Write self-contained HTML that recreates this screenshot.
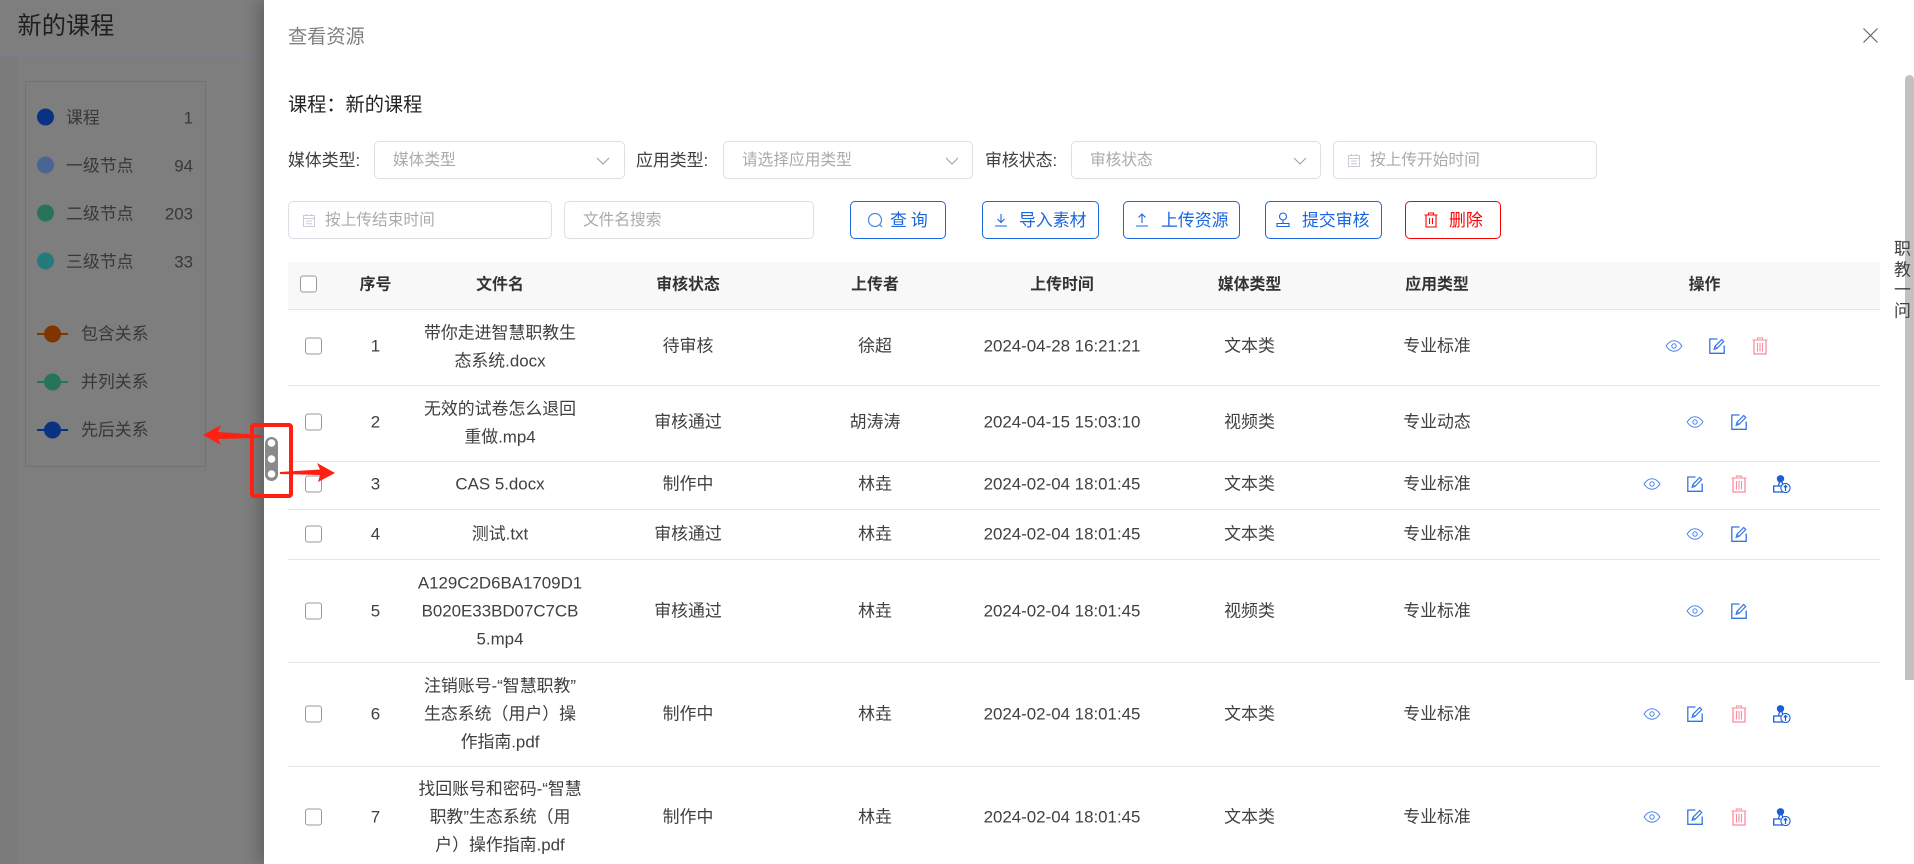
<!DOCTYPE html>
<html lang="zh-CN"><head><meta charset="utf-8"><title>查看资源</title>
<style>
html,body{margin:0;padding:0}
body{width:1914px;height:864px;position:relative;overflow:hidden;background:#7e7e7e;font-family:"Liberation Sans","Noto Sans CJK SC",sans-serif;font-size:16.9px;color:#404040}
div,span,svg{position:absolute;box-sizing:border-box}
.l{white-space:nowrap;transform:translateY(calc(-50% + 1px));line-height:24px}
.lg{color:#383838;transform:translateY(calc(-50% + 2.5px))}
.dot{width:17px;height:17px;border-radius:50%;left:37px;transform:translateY(-50%)}
.rl{width:31px;height:2px;left:37px}
.rc{width:17px;height:17px;border-radius:50%;left:44px;transform:translateY(-50%)}
.f{border:1px solid #dcdfe6;border-radius:5px;height:38px;background:#fff}
.ph{color:#aaa;font-size:15.7px}
.b{height:38px;top:201px;border:1px solid #1a66e0;border-radius:5px;background:#fff}
.bt{color:#1a66e0;top:220px}
.c{transform:translate(-50%,calc(-50% + .6px));text-align:center;white-space:nowrap;line-height:28px}
.h{font-weight:700;color:#333;top:285px;font-size:15.9px}
.hr{left:288px;width:1592px;height:1px;background:#e5e5e5}
.cb{width:17px;height:17px;border:1px solid #98989f;border-radius:3px;background:#fff;left:305px;transform:translateY(-50%)}
.ic{transform:translate(-50%,-50%);overflow:visible}
</style></head><body>
<svg width="0" height="0" style="display:none">
<symbol id="eye" viewBox="0 0 17 12"><path d="M.6 6C3 2.3 5.5.8 8.5.8S14 2.3 16.4 6C14 9.7 11.5 11.2 8.5 11.2S3 9.7.6 6Z" fill="none" stroke="#4a84ea" stroke-width="1"/><circle cx="8.5" cy="6" r="2.2" fill="none" stroke="#4a84ea"/></symbol>
<symbol id="edit" viewBox="0 0 16 16"><path d="M8.5 1H.8V15.300H15.200V7.500" fill="none" stroke="#3376e4" stroke-width="1.300"/><path d="M5.200 11.300l.8-3L12.700 1.500l2 2L8 10.400Z" fill="#fff" stroke="#3376e4" stroke-width="1.200"/><path d="M6 8.400l1.900 1.900" stroke="#3376e4"/></symbol>
<symbol id="trash" viewBox="0 0 16 18"><path d="M.5 3H15.500M5.500 2.500V1h5v1.500" fill="none" stroke="#fb9fae" stroke-width="1.300"/><path d="M2 3.500V17H14V3.500" fill="none" stroke="#fb8b9e" stroke-width="1.300"/><path d="M5.500 6V14.500M8 6V14.500M10.500 6V14.500" stroke="#fb8b9e" stroke-width="1.100"/></symbol>
<symbol id="user" viewBox="0 0 18 18"><circle cx="7.5" cy="3.8" r="3.700" fill="#1a5fd8"/><path d="M6.500 7L5.500 10.500M9 7L10 10" stroke="#1a5fd8" stroke-width="1.300"/><path d="M10 11H.7V17H10" fill="none" stroke="#1a5fd8" stroke-width="1.300"/><circle cx="12.5" cy="13" r="4.600" fill="#fff" stroke="#1a5fd8" stroke-width="1.100"/><path d="M12.500 16V10.500M10.800 12.300l1.700-1.800 1.700 1.800" fill="none" stroke="#1a5fd8" stroke-width="1.200"/></symbol>
<symbol id="cal" viewBox="0 0 14 14"><path d="M1.500 2.500H12.500V13.500H1.500ZM1.500 5.500H12.500M4 8H10M4 10.800H10M4.500 1V3M9.500 1V3" fill="none" stroke="#c8ccd4" stroke-width="1"/></symbol>
<symbol id="chev" viewBox="0 0 14 8"><path d="M1 1l6 6 6-6" fill="none" stroke="#9a9ea6" stroke-width="1"/></symbol>
</svg>

<!-- background page -->
<div style="left:0;top:56px;width:264px;height:1px;background:#767d8a"></div>
<div style="left:0;top:57px;width:18px;height:807px;background:#7a7a7a"></div>
<span class="l" style="left:17.5px;top:26px;font-size:24.2px;line-height:32px;color:#1f1f1f">新的课程</span>
<div style="left:25px;top:81px;width:181px;height:386px;border:1px solid #727272"></div>
<div class="dot" style="top:117px;background:#0a3282"></div><span class="l lg" style="left:66px;top:115.500px">课程</span><span class="l lg" style="right:1721px;top:115.500px">1</span>
<div class="dot" style="top:165px;background:#4a6494"></div><span class="l lg" style="left:66px;top:163.500px">一级节点</span><span class="l lg" style="right:1721px;top:163.500px">94</span>
<div class="dot" style="top:213px;background:#267558"></div><span class="l lg" style="left:66px;top:211.500px">二级节点</span><span class="l lg" style="right:1721px;top:211.500px">203</span>
<div class="dot" style="top:261px;background:#267a7a"></div><span class="l lg" style="left:66px;top:259.500px">三级节点</span><span class="l lg" style="right:1721px;top:259.500px">33</span>
<div class="rl" style="top:333px;background:#803400"></div><div class="rc" style="top:334px;background:#803400"></div><span class="l lg" style="left:81px;top:331.500px">包含关系</span>
<div class="rl" style="top:381px;background:#267558"></div><div class="rc" style="top:382px;background:#267558"></div><span class="l lg" style="left:81px;top:379.500px">并列关系</span>
<div class="rl" style="top:429px;background:#0a3282"></div><div class="rc" style="top:430px;background:#0a3282"></div><span class="l lg" style="left:81px;top:427.500px">先后关系</span>

<!-- drawer -->
<div style="left:264px;top:0;width:1650px;height:864px;background:#fff;box-shadow:-6px 0 14px rgba(0,0,0,.22)"></div>
<span class="l" style="left:288px;top:36.500px;font-size:19.2px;color:#808080">查看资源</span>
<svg style="left:1863px;top:28px" width="15" height="15" viewBox="0 0 15 15"><path d="M.5.5L14.500 14.500M14.500.5L.5 14.500" stroke="#666" stroke-width="1.200"/></svg>
<div style="left:1905px;top:75px;width:9px;height:605px;background:#c1c1c1;border-radius:5px 5px 0 0"></div>
<span class="c" style="left:1902.500px;top:249px;line-height:20px">职</span>
<span class="c" style="left:1902.500px;top:270px;line-height:20px">教</span>
<span class="c" style="left:1902.500px;top:290px;line-height:20px">一</span>
<span class="c" style="left:1902.500px;top:311px;line-height:20px">问</span>
<span class="l" style="left:288px;top:104.500px;font-size:19.2px;color:#222">课程：新的课程</span>

<!-- filters -->
<span class="l" style="left:288px;top:160px">媒体类型:</span>
<div class="f" style="left:374px;top:141px;width:251px"></div><span class="l ph" style="left:393px;top:160px">媒体类型</span>
<svg style="left:596px;top:157px" width="14" height="8"><use href="#chev"/></svg>
<span class="l" style="left:636px;top:160px">应用类型:</span>
<div class="f" style="left:723px;top:141px;width:250px"></div><span class="l ph" style="left:742px;top:160px">请选择应用类型</span>
<svg style="left:945px;top:157px" width="14" height="8"><use href="#chev"/></svg>
<span class="l" style="left:985px;top:160px">审核状态:</span>
<div class="f" style="left:1071px;top:141px;width:250px"></div><span class="l ph" style="left:1090px;top:160px">审核状态</span>
<svg style="left:1293px;top:157px" width="14" height="8"><use href="#chev"/></svg>
<div class="f" style="left:1333px;top:141px;width:264px"></div>
<svg style="left:1347px;top:153px" width="14" height="14"><use href="#cal"/></svg><span class="l ph" style="left:1370px;top:160px">按上传开始时间</span>
<div class="f" style="left:288px;top:201px;width:264px"></div>
<svg style="left:302px;top:213px" width="14" height="14"><use href="#cal"/></svg><span class="l ph" style="left:325px;top:220px">按上传结束时间</span>
<div class="f" style="left:564px;top:201px;width:250px"></div><span class="l ph" style="left:583px;top:220px">文件名搜索</span>

<!-- buttons -->
<div class="b" style="left:850px;width:96px"></div>
<svg style="left:867px;top:212px" width="17" height="17" viewBox="0 0 17 17"><circle cx="8" cy="8" r="6.500" fill="none" stroke="#4a84ea" stroke-width="1.200"/><path d="M12.500 12.500L15 15" stroke="#4a84ea" stroke-width="1.200"/></svg>
<span class="l bt" style="left:890px;letter-spacing:4px">查询</span>
<div class="b" style="left:982px;width:117px"></div>
<svg style="left:994px;top:213px" width="14" height="14" viewBox="0 0 14 14"><path d="M7 1V9M3.500 6L7 9.500 10.500 6M1 13H13" fill="none" stroke="#1a66e0" stroke-width="1.100"/></svg>
<span class="l bt" style="left:1019px">导入素材</span>
<div class="b" style="left:1123px;width:117px"></div>
<svg style="left:1135px;top:213px" width="14" height="14" viewBox="0 0 14 14"><path d="M7 10V1.500M3.500 4.500L7 1 10.500 4.500M1 13H13" fill="none" stroke="#1a66e0" stroke-width="1.100"/></svg>
<span class="l bt" style="left:1161px">上传资源</span>
<div class="b" style="left:1265px;width:117px"></div>
<svg style="left:1276px;top:212px" width="14" height="16" viewBox="0 0 14 16"><circle cx="7" cy="4.500" r="3.500" fill="none" stroke="#1a66e0" stroke-width="1.100"/><path d="M7 8V11.500M1 11.500H13V14.500H1Z" fill="none" stroke="#1a66e0" stroke-width="1.100"/></svg>
<span class="l bt" style="left:1302px">提交审核</span>
<div class="b" style="left:1405px;width:96px;border-color:#f00"></div>
<svg style="left:1424px;top:212px" width="14" height="16" viewBox="0 0 14 16"><path d="M.5 3H13.500M4.500 3V1H9.500V3M2 3V15H12V3M5.500 6V12M8.500 6V12" fill="none" stroke="#f00" stroke-width="1.100"/></svg>
<span class="l bt" style="left:1449px;color:#f00">删除</span>

<!-- table header -->
<div style="left:288px;top:262px;width:1592px;height:48px;background:#f8f8f8;border-bottom:1px solid #e5e5e5"></div>
<div class="cb" style="left:300px;top:284px"></div>
<span class="c h" style="left:375.500px">序号</span><span class="c h" style="left:500px">文件名</span><span class="c h" style="left:688px">审核状态</span><span class="c h" style="left:875px">上传者</span><span class="c h" style="left:1062px">上传时间</span><span class="c h" style="left:1249.500px">媒体类型</span><span class="c h" style="left:1437px">应用类型</span><span class="c h" style="left:1704.500px">操作</span>

<!-- row lines -->
<div class="hr" style="top:385px"></div><div class="hr" style="top:461px"></div><div class="hr" style="top:509px"></div><div class="hr" style="top:559px"></div><div class="hr" style="top:662px"></div><div class="hr" style="top:766px"></div>

<!-- row 1 -->
<div class="cb" style="top:346px"></div>
<span class="c" style="left:375.500px;top:346px">1</span><span class="c" style="left:500px;top:347px">带你走进智慧职教生<br>态系统.docx</span><span class="c" style="left:688px;top:346px">待审核</span><span class="c" style="left:875px;top:346px">徐超</span><span class="c" style="left:1062px;top:346px">2024-04-28 16:21:21</span><span class="c" style="left:1249.500px;top:346px">文本类</span><span class="c" style="left:1437px;top:346px">专业标准</span>
<svg class="ic" style="left:1674px;top:346px" width="17" height="12"><use href="#eye"/></svg><svg class="ic" style="left:1717px;top:346px" width="16" height="16"><use href="#edit"/></svg><svg class="ic" style="left:1760px;top:346px" width="16" height="18"><use href="#trash"/></svg>
<!-- row 2 -->
<div class="cb" style="top:422px"></div>
<span class="c" style="left:375.500px;top:422px">2</span><span class="c" style="left:500px;top:423px">无效的试卷怎么退回<br>重做.mp4</span><span class="c" style="left:688px;top:422px">审核通过</span><span class="c" style="left:875px;top:422px">胡涛涛</span><span class="c" style="left:1062px;top:422px">2024-04-15 15:03:10</span><span class="c" style="left:1249.500px;top:422px">视频类</span><span class="c" style="left:1437px;top:422px">专业动态</span>
<svg class="ic" style="left:1695px;top:422px" width="17" height="12"><use href="#eye"/></svg><svg class="ic" style="left:1739px;top:422px" width="16" height="16"><use href="#edit"/></svg>
<!-- row 3 -->
<div class="cb" style="top:484px"></div>
<span class="c" style="left:375.500px;top:484px">3</span><span class="c" style="left:500px;top:484px">CAS 5.docx</span><span class="c" style="left:688px;top:484px">制作中</span><span class="c" style="left:875px;top:484px">林垚</span><span class="c" style="left:1062px;top:484px">2024-02-04 18:01:45</span><span class="c" style="left:1249.500px;top:484px">文本类</span><span class="c" style="left:1437px;top:484px">专业标准</span>
<svg class="ic" style="left:1652px;top:484px" width="17" height="12"><use href="#eye"/></svg><svg class="ic" style="left:1695px;top:484px" width="16" height="16"><use href="#edit"/></svg><svg class="ic" style="left:1739px;top:484px" width="16" height="18"><use href="#trash"/></svg><svg class="ic" style="left:1782px;top:484px" width="18" height="18"><use href="#user"/></svg>
<!-- row 4 -->
<div class="cb" style="top:534px"></div>
<span class="c" style="left:375.500px;top:534px">4</span><span class="c" style="left:500px;top:534px">测试.txt</span><span class="c" style="left:688px;top:534px">审核通过</span><span class="c" style="left:875px;top:534px">林垚</span><span class="c" style="left:1062px;top:534px">2024-02-04 18:01:45</span><span class="c" style="left:1249.500px;top:534px">文本类</span><span class="c" style="left:1437px;top:534px">专业标准</span>
<svg class="ic" style="left:1695px;top:534px" width="17" height="12"><use href="#eye"/></svg><svg class="ic" style="left:1739px;top:534px" width="16" height="16"><use href="#edit"/></svg>
<!-- row 5 -->
<div class="cb" style="top:611px"></div>
<span class="c" style="left:375.500px;top:611px">5</span><span class="c" style="left:500px;top:611px">A129C2D6BA1709D1<br>B020E33BD07C7CB<br>5.mp4</span><span class="c" style="left:688px;top:611px">审核通过</span><span class="c" style="left:875px;top:611px">林垚</span><span class="c" style="left:1062px;top:611px">2024-02-04 18:01:45</span><span class="c" style="left:1249.500px;top:611px">视频类</span><span class="c" style="left:1437px;top:611px">专业标准</span>
<svg class="ic" style="left:1695px;top:611px" width="17" height="12"><use href="#eye"/></svg><svg class="ic" style="left:1739px;top:611px" width="16" height="16"><use href="#edit"/></svg>
<!-- row 6 -->
<div class="cb" style="top:714px"></div>
<span class="c" style="left:375.500px;top:714px">6</span><span class="c" style="left:500px;top:714px">注销账号-“智慧职教”<br>生态系统（用户）操<br>作指南.pdf</span><span class="c" style="left:688px;top:714px">制作中</span><span class="c" style="left:875px;top:714px">林垚</span><span class="c" style="left:1062px;top:714px">2024-02-04 18:01:45</span><span class="c" style="left:1249.500px;top:714px">文本类</span><span class="c" style="left:1437px;top:714px">专业标准</span>
<svg class="ic" style="left:1652px;top:714px" width="17" height="12"><use href="#eye"/></svg><svg class="ic" style="left:1695px;top:714px" width="16" height="16"><use href="#edit"/></svg><svg class="ic" style="left:1739px;top:714px" width="16" height="18"><use href="#trash"/></svg><svg class="ic" style="left:1782px;top:714px" width="18" height="18"><use href="#user"/></svg>
<!-- row 7 -->
<div class="cb" style="top:817px"></div>
<span class="c" style="left:375.500px;top:817px">7</span><span class="c" style="left:500px;top:817px">找回账号和密码-“智慧<br>职教”生态系统（用<br>户）操作指南.pdf</span><span class="c" style="left:688px;top:817px">制作中</span><span class="c" style="left:875px;top:817px">林垚</span><span class="c" style="left:1062px;top:817px">2024-02-04 18:01:45</span><span class="c" style="left:1249.500px;top:817px">文本类</span><span class="c" style="left:1437px;top:817px">专业标准</span>
<svg class="ic" style="left:1652px;top:817px" width="17" height="12"><use href="#eye"/></svg><svg class="ic" style="left:1695px;top:817px" width="16" height="16"><use href="#edit"/></svg><svg class="ic" style="left:1739px;top:817px" width="16" height="18"><use href="#trash"/></svg><svg class="ic" style="left:1782px;top:817px" width="18" height="18"><use href="#user"/></svg>

<!-- annotation -->
<svg style="left:0;top:0" width="1914" height="864">
<rect x="265" y="437" width="13" height="44" rx="6.5" fill="#8a8a8a"/>
<circle cx="271.5" cy="443" r="3.800" fill="#fff"/><circle cx="271.5" cy="459" r="3.800" fill="#fff"/><circle cx="271.5" cy="474" r="3.800" fill="#fff"/>
<rect x="252" y="425" width="39" height="71" rx="2" fill="none" stroke="#fe2012" stroke-width="4"/>
<path d="M203 435L221 425 218 432 262 435 262 438 218 439 221 445Z" fill="#fe2012"/>
<path d="M280 472L320 469.500 317 463 335 473 318 482 320 475 280 474Z" fill="#fe2012"/>
</svg>
</body></html>
